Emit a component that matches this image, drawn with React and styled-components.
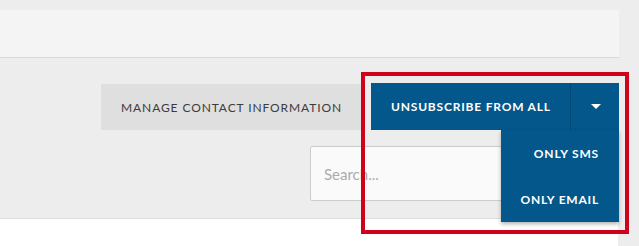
import React, { useState } from 'react';
import styled, { createGlobalStyle } from 'styled-components';

const GlobalStyle = createGlobalStyle`
  body {
    margin: 0;
    background: #ededed;
    font-family: Lato, "Open Sans", sans-serif;
  }
`;

const Page = styled.div`
  position: relative;
  width: 639px;
  height: 246px;
  padding-top: 10px;
  box-sizing: border-box;
  overflow: hidden;
`;

const TopPanel = styled.div`
  width: 619px;
  height: 47px;
  background: #f4f4f4;
  border-bottom: 1px solid #d8d8d8;
`;

const Actions = styled.div`
  display: flex;
  justify-content: flex-end;
  align-items: flex-start;
  gap: 10px;
  padding-right: 20px;
  margin-top: 25px;
`;

const PlainButton = styled.button`
  width: 260px;
  height: 46px;
  margin-top: 1px;
  border: none;
  background: #dfdfdf;
  color: #3c3c3c;
  font-family: inherit;
  font-size: 12px;
  letter-spacing: 0.9px;
  text-transform: uppercase;
  padding: 0 0 0 20px;
  text-align: left;
`;

const SplitButton = styled.div`
  position: relative;
  display: flex;
  height: 47px;
  background: #03578a;
`;

const MainPart = styled.button`
  width: 200px;
  border: none;
  border-right: 1px solid #024874;
  background: transparent;
  color: #fff;
  font-family: inherit;
  font-weight: 700;
  font-size: 12px;
  letter-spacing: 0.8px;
  text-align: left;
  padding: 0 0 0 20px;
`;

const CaretPart = styled.button`
  width: 48px;
  border: none;
  background: transparent;
  display: flex;
  align-items: center;
  justify-content: center;
  padding: 0 0 0 2px;
`;

const Caret = styled.span`
  width: 0;
  height: 0;
  border-left: 5px solid transparent;
  border-right: 5px solid transparent;
  border-top: 5px solid #fff;
`;

const Menu = styled.div`
  position: absolute;
  top: 100%;
  right: 0;
  width: 118px;
  background: #03578a;
  box-shadow: 0 2px 4px rgba(0, 0, 0, 0.3);
  z-index: 2;
`;

const MenuItem = styled.div`
  height: 46px;
  display: flex;
  align-items: center;
  justify-content: flex-end;
  padding-right: 20px;
  color: #fff;
  font-weight: 700;
  font-size: 12px;
  letter-spacing: 0.8px;
`;

const SearchRow = styled.div`
  display: flex;
  justify-content: flex-end;
  padding-right: 20px;
  margin-top: 16px;
`;

const SearchInput = styled.input`
  width: 309px;
  height: 55px;
  box-sizing: border-box;
  border: 1px solid #cccccc;
  border-radius: 2px;
  background: #fafafa;
  padding: 0 13px;
  font-family: inherit;
  font-size: 15px;
  color: #333;
  outline: none;
  &::placeholder {
    color: #ababab;
  }
`;

const Content = styled.div`
  width: 618px;
  height: 40px;
  margin-top: 17px;
  background: #fff;
  border-top: 1px solid #dcdcdc;
`;

const Highlight = styled.div`
  position: absolute;
  left: 361px;
  top: 72px;
  width: 268px;
  height: 162px;
  box-sizing: border-box;
  border: 4px solid #d0011b;
  z-index: 3;
  pointer-events: none;
`;

export default function App() {
  const [open] = useState(true);
  return (
    <>
      <GlobalStyle />
      <Page>
        <TopPanel />
        <Actions>
          <PlainButton>Manage contact information</PlainButton>
          <SplitButton>
            <MainPart>UNSUBSCRIBE FROM ALL</MainPart>
            <CaretPart>
              <Caret />
            </CaretPart>
            {open && (
              <Menu>
                <MenuItem>ONLY SMS</MenuItem>
                <MenuItem>ONLY EMAIL</MenuItem>
              </Menu>
            )}
          </SplitButton>
        </Actions>
        <SearchRow>
          <SearchInput placeholder="Search..." />
        </SearchRow>
        <Content />
        <Highlight />
      </Page>
    </>
  );
}
